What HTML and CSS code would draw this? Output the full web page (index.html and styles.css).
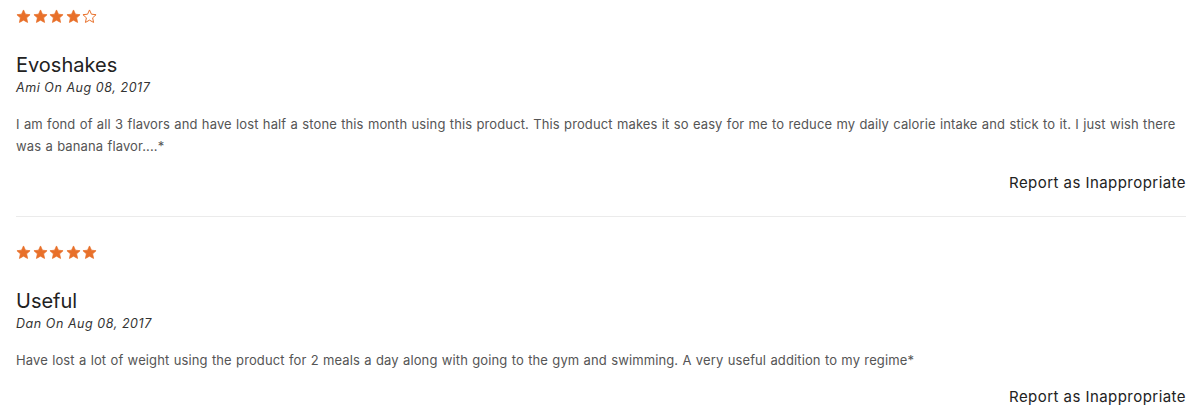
FILE: index.html
```html
<!DOCTYPE html>
<html lang="en">
<head>
    <meta charset="UTF-8">
    <title>Reviews</title>
    <link rel="stylesheet" href="styles.css">
</head>
<body>
    <div class="reviews">
        <div class="review">
            <div class="rating">
                <svg class="star" viewBox="0 0 24 24"><polygon points="12,1.5 15.1,8.3 22.5,9.1 17,14.1 18.5,21.5 12,17.8 5.5,21.5 7,14.1 1.5,9.1 8.9,8.3"/></svg>
                <svg class="star" viewBox="0 0 24 24"><polygon points="12,1.5 15.1,8.3 22.5,9.1 17,14.1 18.5,21.5 12,17.8 5.5,21.5 7,14.1 1.5,9.1 8.9,8.3"/></svg>
                <svg class="star" viewBox="0 0 24 24"><polygon points="12,1.5 15.1,8.3 22.5,9.1 17,14.1 18.5,21.5 12,17.8 5.5,21.5 7,14.1 1.5,9.1 8.9,8.3"/></svg>
                <svg class="star" viewBox="0 0 24 24"><polygon points="12,1.5 15.1,8.3 22.5,9.1 17,14.1 18.5,21.5 12,17.8 5.5,21.5 7,14.1 1.5,9.1 8.9,8.3"/></svg>
                <svg class="star empty" viewBox="0 0 24 24"><polygon points="12,1.5 15.1,8.3 22.5,9.1 17,14.1 18.5,21.5 12,17.8 5.5,21.5 7,14.1 1.5,9.1 8.9,8.3"/></svg>
            </div>
            <h3 class="review-title">Evoshakes</h3>
            <div class="review-meta">Ami On Aug 08, 2017</div>
            <p class="review-text">I am fond of all 3 flavors and have lost half a stone this month using this product. This product makes it so easy for me to reduce my daily calorie intake and stick to it. I just wish there was a banana flavor....*</p>
            <div class="review-actions">
                <a class="report-link" href="#">Report as Inappropriate</a>
            </div>
        </div>

        <div class="review">
            <div class="rating">
                <svg class="star" viewBox="0 0 24 24"><polygon points="12,1.5 15.1,8.3 22.5,9.1 17,14.1 18.5,21.5 12,17.8 5.5,21.5 7,14.1 1.5,9.1 8.9,8.3"/></svg>
                <svg class="star" viewBox="0 0 24 24"><polygon points="12,1.5 15.1,8.3 22.5,9.1 17,14.1 18.5,21.5 12,17.8 5.5,21.5 7,14.1 1.5,9.1 8.9,8.3"/></svg>
                <svg class="star" viewBox="0 0 24 24"><polygon points="12,1.5 15.1,8.3 22.5,9.1 17,14.1 18.5,21.5 12,17.8 5.5,21.5 7,14.1 1.5,9.1 8.9,8.3"/></svg>
                <svg class="star" viewBox="0 0 24 24"><polygon points="12,1.5 15.1,8.3 22.5,9.1 17,14.1 18.5,21.5 12,17.8 5.5,21.5 7,14.1 1.5,9.1 8.9,8.3"/></svg>
                <svg class="star" viewBox="0 0 24 24"><polygon points="12,1.5 15.1,8.3 22.5,9.1 17,14.1 18.5,21.5 12,17.8 5.5,21.5 7,14.1 1.5,9.1 8.9,8.3"/></svg>
            </div>
            <h3 class="review-title">Useful</h3>
            <div class="review-meta">Dan On Aug 08, 2017</div>
            <p class="review-text">Have lost a lot of weight using the product for 2 meals a day along with going to the gym and swimming. A very useful addition to my regime*</p>
            <div class="review-actions">
                <a class="report-link" href="#">Report as Inappropriate</a>
            </div>
        </div>
    </div>
</body>
</html>
```

FILE: styles.css
```css
body {
    margin: 0;
    padding: 0;
    background: #fff;
    font-family: Inter, "Open Sans", sans-serif;
    color: #333;
}

.reviews {
    padding: 0 18px 0 16px;
}

.review {
    padding: 9px 0 23px;
    border-bottom: 1px solid #ebebeb;
}

.review + .review {
    padding-top: 28px;
    padding-bottom: 0;
    border-bottom: none;
}

.rating {
    display: flex;
    gap: 1.5px;
    height: 16px;
}

.star {
    width: 15px;
    height: 15px;
    fill: #e8702a;
    stroke: #e8702a;
    stroke-width: 1.2;
    stroke-linejoin: round;
}

.star.empty {
    fill: none;
    stroke-width: 1.6;
}

.review-title {
    margin: 28px 0 0;
    font-size: 20px;
    font-weight: 400;
    line-height: 24px;
    color: #222;
}

.review-meta {
    margin-top: 3px;
    font-size: 12.5px;
    font-style: italic;
    letter-spacing: 0.55px;
    line-height: 16px;
    color: #333;
}

.review-text {
    margin: 17px 0 0;
    font-size: 13px;
    letter-spacing: 0.12px;
    word-spacing: 0.5px;
    line-height: 22px;
    color: #555;
}

.review-actions {
    display: flex;
    justify-content: flex-end;
    margin-top: 16px;
}

.report-link {
    font-size: 15px;
    letter-spacing: 0.45px;
    line-height: 20px;
    color: #222;
    text-decoration: none;
}
```
